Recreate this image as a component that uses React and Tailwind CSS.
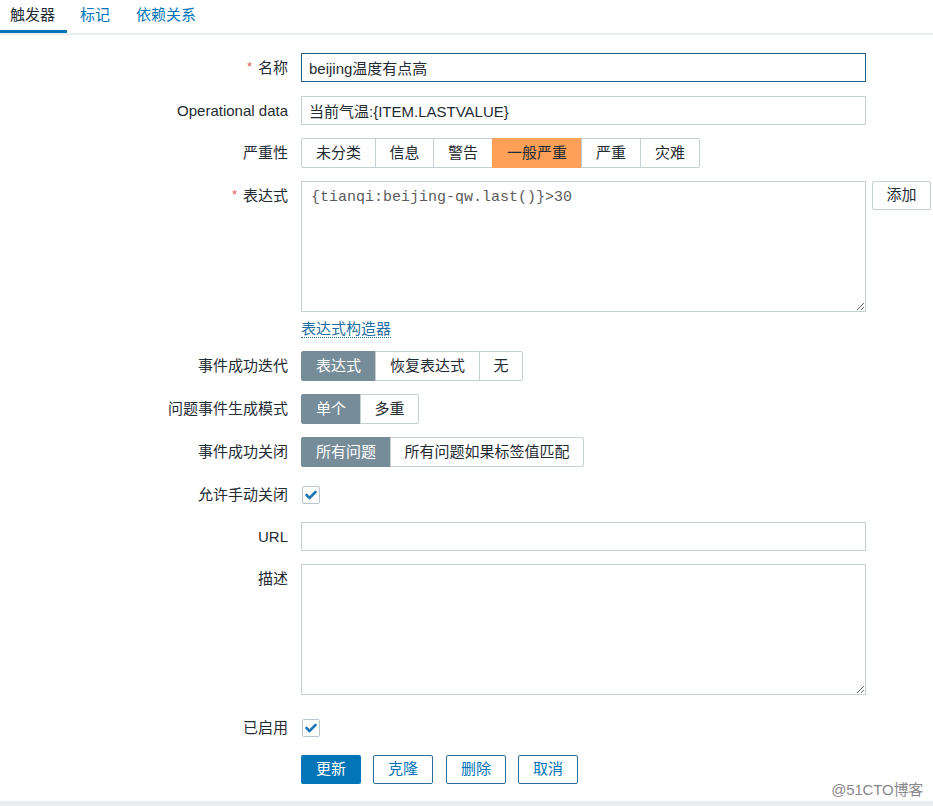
import React from 'react';

const font = { fontFamily: '"Liberation Sans", Arial, "Noto Sans CJK SC", sans-serif' };

const Label = ({ children, required }) => (
  <div className="text-right leading-[29px] text-[#1f2c33] whitespace-nowrap">
    {required && <span className="text-[#e45959] mr-[6px] relative top-[-2px] text-[13px]">*</span>}
    {children}
  </div>
);

const Segmented = ({ items, active, activeClass }) => (
  <div className="flex h-[30px]">
    {items.map((it, i) => {
      const on = i === active;
      return (
        <div key={it.label}
             className={`flex items-center justify-center border text-[15px] ${i > 0 ? '-ml-px' : 'rounded-l-[2px]'} ${i === items.length - 1 ? 'rounded-r-[2px]' : ''} ${on ? activeClass : 'bg-white border-[#c5cfd4] text-[#1f2c33]'}`}
             style={{ width: it.w }}>
          {it.label}
        </div>
      );
    })}
  </div>
);

const Check = () => (
  <div className="w-[18px] h-[18px] ml-px border border-[#b9c5cb] rounded-[2px] bg-white flex items-center justify-center">
    <svg width="12" height="10" viewBox="0 0 12 10">
      <path d="M1.5 5 L4.5 8 L10.5 2" fill="none" stroke="#1f78b4" strokeWidth="2.6" strokeLinecap="round" strokeLinejoin="round"/>
    </svg>
  </div>
);

const Row = ({ label, required, mt = 'mt-[13px]', children }) => (
  <div className={`grid grid-cols-[288px_1fr] gap-x-[13px] ${mt}`}>
    <Label required={required}>{label}</Label>
    <div>{children}</div>
  </div>
);

export default function App() {
  const tabs = [
    { label: '触发器', cls: 'pl-[10px] pr-[12px] text-[#1f2c33] border-[#0275b8]' },
    { label: '标记', cls: 'px-[13px] text-[#0275b8] border-transparent' },
    { label: '依赖关系', cls: 'px-[13px] text-[#0275b8] border-transparent' },
  ];
  return (
    <div className="relative min-h-[806px] bg-[#ebeef0] text-[15px]" style={font}>
      <div className="bg-white h-[801px]">
        {/* Tabs */}
        <div className="flex border-b-2 border-[#ebeef0]">
          {tabs.map((t) => (
            <div key={t.label} className={`h-[33px] leading-[30px] border-b-[3px] ${t.cls}`}>{t.label}</div>
          ))}
        </div>

        {/* Form */}
        <div className="pt-[18px]">
          <Row label="名称" required mt="mt-0">
            <input readOnly value="beijing温度有点高"
                   className="w-[565px] h-[29px] px-[7px] border border-[#24607e] text-[15px] text-[#1f2c33] outline-none" style={font}/>
          </Row>
          <Row label="Operational data">
            <input readOnly value="当前气温:{ITEM.LASTVALUE}"
                   className="w-[565px] h-[29px] px-[7px] border border-[#c5cfd4] text-[15px] text-[#1f2c33] outline-none" style={font}/>
          </Row>
          <Row label="严重性">
            <Segmented active={3} activeClass="bg-[#ffa059] border-[#ffa059] text-[#1f2c33]"
                       items={[{ label: '未分类', w: 75 }, { label: '信息', w: 59 }, { label: '警告', w: 60 }, { label: '一般严重', w: 90 }, { label: '严重', w: 60 }, { label: '灾难', w: 60 }]}/>
          </Row>
          <Row label="表达式" required>
            <div className="flex items-start">
              <textarea readOnly value="{tianqi:beijing-qw.last()}>30"
                        className="w-[565px] h-[131px] px-[9px] py-[5px] border border-[#c5cfd4] text-[15px] text-[#5c5c5c] outline-none"
                        style={{ fontFamily: '"Liberation Mono", "Courier New", monospace' }}/>
              <div className="ml-[6px] w-[59px] h-[29px] flex items-center justify-center border border-[#c5cfd4] rounded-[2px] text-[#1f2c33]">添加</div>
            </div>
          </Row>
          <div className="grid grid-cols-[288px_1fr] gap-x-[13px] mt-[7px]">
            <div/>
            <div className="leading-[20px]">
              <span className="text-[#1f6fa6] border-b border-dotted border-[#1f6fa6]">表达式构造器</span>
            </div>
          </div>
          <Row label="事件成功迭代" mt="mt-[12px]">
            <Segmented active={0} activeClass="bg-[#768d99] border-[#768d99] text-white"
                       items={[{ label: '表达式', w: 75 }, { label: '恢复表达式', w: 105 }, { label: '无', w: 44 }]}/>
          </Row>
          <Row label="问题事件生成模式">
            <Segmented active={0} activeClass="bg-[#768d99] border-[#768d99] text-white"
                       items={[{ label: '单个', w: 60 }, { label: '多重', w: 59 }]}/>
          </Row>
          <Row label="事件成功关闭">
            <Segmented active={0} activeClass="bg-[#768d99] border-[#768d99] text-white"
                       items={[{ label: '所有问题', w: 90 }, { label: '所有问题如果标签值匹配', w: 194 }]}/>
          </Row>
          <Row label="允许手动关闭">
            <div className="h-[29px] flex items-center"><Check/></div>
          </Row>
          <Row label="URL">
            <input readOnly value=""
                   className="w-[565px] h-[29px] px-[7px] border border-[#c5cfd4] outline-none"/>
          </Row>
          <Row label="描述">
            <textarea readOnly value=""
                      className="w-[565px] h-[131px] border border-[#c5cfd4] outline-none block"/>
          </Row>
          <Row label="已启用" mt="mt-[18px]">
            <div className="h-[29px] flex items-center"><Check/></div>
          </Row>
          <Row label="" >
            <div className="flex items-center h-[29px]">
              <div className="w-[60px] h-[29px] flex items-center justify-center rounded-[2px] bg-[#0275b8] text-white">更新</div>
              <div className="ml-[12px] w-[60px] h-[29px] flex items-center justify-center rounded-[2px] border border-[#2b6f98] text-[#0275b8]">克隆</div>
              <div className="ml-[13px] w-[60px] h-[29px] flex items-center justify-center rounded-[2px] border border-[#2b6f98] text-[#0275b8]">删除</div>
              <div className="ml-[12px] w-[60px] h-[29px] flex items-center justify-center rounded-[2px] border border-[#2b6f98] text-[#0275b8]">取消</div>
            </div>
          </Row>
        </div>
      </div>

      {/* Watermark */}
      <div className="absolute right-[10px] top-[779px] text-[15px] text-[#8a8a8a] tracking-[-0.2px]">@51CTO博客</div>
    </div>
  );
}
